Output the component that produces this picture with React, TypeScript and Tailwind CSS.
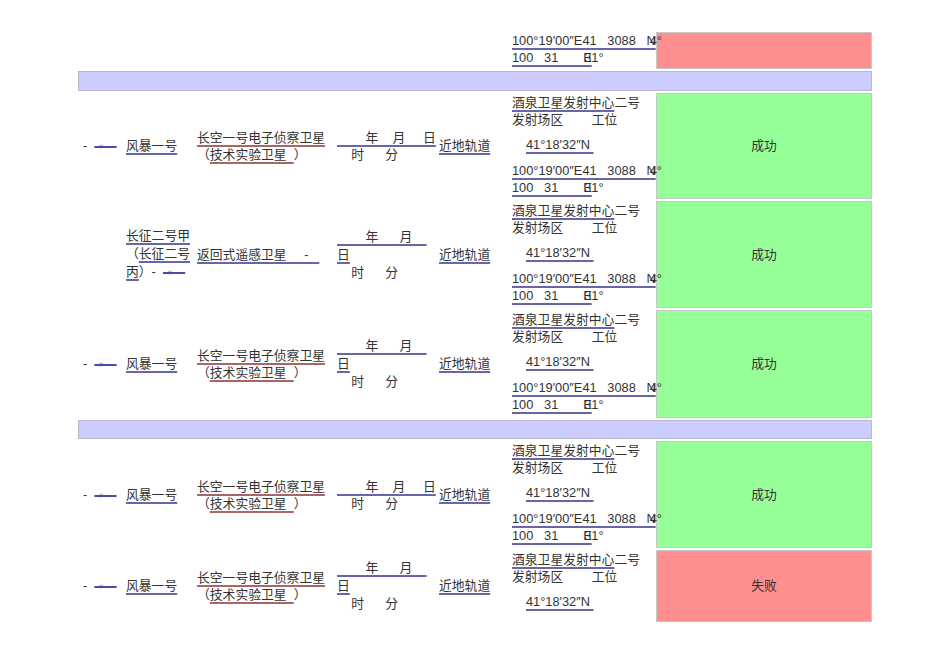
import React from "react";

const UB = "underline decoration-[#6666aa] decoration-[1.5px] underline-offset-[3px]";
const UR = "underline decoration-[#aa6666] decoration-[1.5px] underline-offset-[3px]";

function Mark() {
  return (
    <span className="whitespace-pre">
      {"-  "}
      <span className="text-[8px] text-[#b0b0b0] line-through decoration-[#4b4ba0] decoration-[1.5px] align-[1px]">
        {"  #      "}
      </span>
    </span>
  );
}

function Coords() {
  return (
    <>
      <div>
        <span className={UB}>{"100°19′00″E41   3088   N"}</span>
        <span className="ml-[-6px]">4°</span>
      </div>
      <div>
        <span className={UB}>{"100   31       E"}</span>
        <span className="ml-[-7.5px]">31°</span>
      </div>
    </>
  );
}

function Site({ full = true }: { full?: boolean }) {
  return (
    <div className="relative z-10 w-[144px] shrink-0 whitespace-pre pt-px leading-[17px]">
      <div>
        <span className={UB}>酒泉卫星发射中心</span>二号
      </div>
      <div>{"发射场区        工位"}</div>
      <div className="mt-[8px] pl-[14px]">
        <span className={UB}>{"41°18′32″N "}</span>
      </div>
      {full && (
        <div className="mt-[9px]">
          <Coords />
        </div>
      )}
    </div>
  );
}

function Result({ ok, label = true }: { ok: boolean; label?: boolean }) {
  return (
    <div
      className={
        ok
          ? "flex w-[216px] shrink-0 items-center justify-center border border-[#c8c8c8] bg-[#97ff97]"
          : "flex w-[216px] shrink-0 items-center justify-center border border-[#c8c8c8] bg-[#ff8f8f]"
      }
    >
      {label ? (ok ? "成功" : "失败") : null}
    </div>
  );
}

function SatCol() {
  return (
    <div className="flex w-[140px] shrink-0 flex-col justify-center whitespace-pre leading-[17px]">
      <div>
        <span className={UR}>长空一号电子侦察卫星</span>
      </div>
      <div>
        （<span className={UR}>{"技术实验卫星  "}</span>）
      </div>
    </div>
  );
}

function DateTwo() {
  return (
    <div className="flex w-[102px] shrink-0 flex-col justify-center whitespace-pre leading-[17px]">
      <div>
        <span className={UB}>{"        年    月     日"}</span>
      </div>
      <div>{"    时      分"}</div>
    </div>
  );
}

function DateThree() {
  return (
    <div className="flex w-[102px] shrink-0 flex-col justify-center whitespace-pre leading-[18px]">
      <div>
        <span className={UB}>{"        年      月    "}</span>
      </div>
      <div>
        <span className={UB}>日</span>
      </div>
      <div>{"    时      分"}</div>
    </div>
  );
}

function MarkCol() {
  return (
    <div className="flex w-[48px] shrink-0 items-center pl-[5px]">
      <Mark />
    </div>
  );
}

function RocketCol() {
  return (
    <div className="flex w-[71px] shrink-0 items-center">
      <span className={UB}>风暴一号</span>
    </div>
  );
}

function OrbitCol() {
  return (
    <div className="flex w-[73px] shrink-0 items-center">
      <span className={UB}>近地轨道</span>
    </div>
  );
}

function StdRow({ h, two, ok, full = true }: { h: string; two: boolean; ok: boolean; full?: boolean }) {
  return (
    <div className={"flex " + h}>
      <MarkCol />
      <RocketCol />
      <SatCol />
      {two ? <DateTwo /> : <DateThree />}
      <OrbitCol />
      <Site full={full} />
      <Result ok={ok} />
    </div>
  );
}

export default function App() {
  return (
    <div className="h-[672px] w-[950px] overflow-hidden bg-white text-[12.8px] text-[#333333] [font-family:'Liberation_Sans','Noto_Sans_CJK_SC',sans-serif]">
      <div className="ml-[78px] flex w-[794px] flex-col gap-[2px] pt-[32px]">
        {/* partial top row */}
        <div className="flex h-[37px]">
          <div className="w-[434px] shrink-0" />
          <div className="relative z-10 w-[144px] shrink-0 whitespace-pre leading-[17px]">
            <Coords />
          </div>
          <Result ok={false} label={false} />
        </div>

        <div className="h-[20px] border border-[#b8b8cc] bg-[#ccccff]" />

        <div className="flex h-[106px]">
          <MarkCol />
          <RocketCol />
          <SatCol />
          <DateTwo />
          <OrbitCol />
          <Site />
          <Result ok={true} />
        </div>

        <div className="flex h-[107px]">
          <div className="w-[48px] shrink-0" />
          <div className="flex w-[71px] shrink-0 flex-col justify-center whitespace-pre leading-[18px]">
            <div>
              <span className={UB}>长征二号甲</span>
            </div>
            <div>
              （<span className={UB}>长征二号</span>
            </div>
            <div>
              <span className={UB}>丙</span>）<Mark />
            </div>
          </div>
          <div className="flex w-[140px] shrink-0 items-center whitespace-pre">
            <span className={UB}>{"返回式遥感卫星     -   "}</span>
          </div>
          <DateThree />
          <OrbitCol />
          <Site />
          <Result ok={true} />
        </div>

        <StdRow h="h-[108px]" two={false} ok={true} />

        <div className="h-[19px] border border-[#b8b8cc] bg-[#ccccff]" />

        <StdRow h="h-[107px]" two={true} ok={true} />

        <StdRow h="h-[72px]" two={false} ok={false} full={false} />
      </div>
    </div>
  );
}
